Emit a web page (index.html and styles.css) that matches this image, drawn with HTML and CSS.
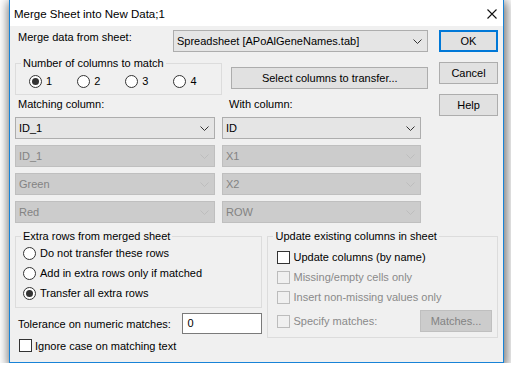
FILE: index.html
```html
<!DOCTYPE html>
<html>
<head>
<meta charset="utf-8">
<link rel="stylesheet" href="styles.css">
</head>
<body>
<div class="window">
  <div class="titlebar">
    <span class="title">Merge Sheet into New Data;1</span>
    <svg class="close" width="10" height="10" viewBox="0 0 10 10"><path d="M0.5 0.5 L9.5 9.5 M9.5 0.5 L0.5 9.5" stroke="#111" stroke-width="1.1" fill="none"/></svg>
  </div>
  <div class="client">
    <div class="top">
      <div class="main">
        <div class="row1">
          <span class="lbl-sheet">Merge data from sheet:</span>
          <div class="combo combo-sheet"><span>Spreadsheet [APoAlGeneNames.tab]</span><svg class="chev" width="9" height="5" viewBox="0 0 9 5"><path d="M0.5 0.5 L4.5 4.5 L8.5 0.5" stroke="#333" fill="none"/></svg></div>
        </div>
        <div class="row2">
          <fieldset class="group group-num">
            <legend>Number of columns to match</legend>
            <div class="radios">
              <label class="radio"><span class="rb checked"></span>1</label>
              <label class="radio"><span class="rb"></span>2</label>
              <label class="radio"><span class="rb"></span>3</label>
              <label class="radio"><span class="rb"></span>4</label>
            </div>
          </fieldset>
          <div class="btn btn-select">Select columns to transfer...</div>
        </div>
        <div class="col-labels">
          <span class="lbl-match">Matching column:</span>
          <span class="lbl-with">With column:</span>
        </div>
        <div class="combos">
          <div class="combo"><span>ID_1</span><svg class="chev" width="9" height="5" viewBox="0 0 9 5"><path d="M0.5 0.5 L4.5 4.5 L8.5 0.5" stroke="#333" fill="none"/></svg></div>
          <div class="combo"><span>ID</span><svg class="chev" width="9" height="5" viewBox="0 0 9 5"><path d="M0.5 0.5 L4.5 4.5 L8.5 0.5" stroke="#333" fill="none"/></svg></div>
          <div class="combo disabled"><span>ID_1</span><svg class="chev" width="9" height="5" viewBox="0 0 9 5"><path d="M0.5 0.5 L4.5 4.5 L8.5 0.5" stroke="#bdbdbd" fill="none"/></svg></div>
          <div class="combo disabled"><span>X1</span><svg class="chev" width="9" height="5" viewBox="0 0 9 5"><path d="M0.5 0.5 L4.5 4.5 L8.5 0.5" stroke="#bdbdbd" fill="none"/></svg></div>
          <div class="combo disabled"><span>Green</span><svg class="chev" width="9" height="5" viewBox="0 0 9 5"><path d="M0.5 0.5 L4.5 4.5 L8.5 0.5" stroke="#bdbdbd" fill="none"/></svg></div>
          <div class="combo disabled"><span>X2</span><svg class="chev" width="9" height="5" viewBox="0 0 9 5"><path d="M0.5 0.5 L4.5 4.5 L8.5 0.5" stroke="#bdbdbd" fill="none"/></svg></div>
          <div class="combo disabled"><span>Red</span><svg class="chev" width="9" height="5" viewBox="0 0 9 5"><path d="M0.5 0.5 L4.5 4.5 L8.5 0.5" stroke="#bdbdbd" fill="none"/></svg></div>
          <div class="combo disabled"><span>ROW</span><svg class="chev" width="9" height="5" viewBox="0 0 9 5"><path d="M0.5 0.5 L4.5 4.5 L8.5 0.5" stroke="#bdbdbd" fill="none"/></svg></div>
        </div>
      </div>
      <div class="buttons">
        <div class="btn btn-ok">OK</div>
        <div class="btn">Cancel</div>
        <div class="btn">Help</div>
      </div>
    </div>
    <div class="bottom">
      <div class="left-col">
        <fieldset class="group group-extra">
          <legend>Extra rows from merged sheet</legend>
          <div class="group-body extra-body">
            <label class="radio vrow"><span class="rb"></span>Do not transfer these rows</label>
            <label class="radio vrow"><span class="rb"></span>Add in extra rows only if matched</label>
            <label class="radio vrow"><span class="rb checked"></span>Transfer all extra rows</label>
          </div>
        </fieldset>
        <div class="tol-row">
          <span>Tolerance on numeric matches:</span>
          <div class="textbox">0</div>
        </div>
        <label class="check ignore"><span class="cb"></span>Ignore case on matching text</label>
      </div>
      <fieldset class="group group-update">
        <legend>Update existing columns in sheet</legend>
        <div class="group-body update-body">
          <label class="check crow"><span class="cb"></span>Update columns (by name)</label>
          <label class="check crow disabled"><span class="cb"></span>Missing/empty cells only</label>
          <label class="check crow disabled"><span class="cb"></span>Insert non-missing values only</label>
          <div class="spec-row">
            <label class="check disabled"><span class="cb"></span>Specify matches:</label>
            <div class="btn btn-disabled btn-matches">Matches...</div>
          </div>
        </div>
      </fieldset>
    </div>
  </div>
</div>
</body>
</html>
```
FILE: styles.css
```css
html, body {
  margin: 0;
  padding: 0;
  background: #ffffff;
}
body {
  font-family: "Liberation Sans", Arial, sans-serif;
  font-size: 11px;
  color: #000;
}
.window {
  margin-left: 9px;
  width: 495px;
  height: 363px;
  box-sizing: border-box;
  border: 1px solid #1883d7;
  border-top: none;
  background: #f0f0f0;
  box-shadow: 1px 3px 10px 2px rgba(0, 0, 0, 0.55);
}
.titlebar {
  height: 26px;
  background: #ffffff;
  display: flex;
  align-items: center;
  justify-content: space-between;
  padding: 0 6px 0 4px;
}
.title {
  font-size: 11.5px;
  padding-top: 1px;
}
.close {
  display: block;
  margin-top: 1px;
}
.client {
  padding: 0 5px 0 5px;
}
.top {
  display: flex;
  gap: 11px;
}
.main {
  width: 413px;
  display: flex;
  flex-direction: column;
}
.row1 {
  display: flex;
  align-items: flex-start;
  margin-top: 4px;
  height: 22px;
}
.lbl-sheet {
  width: 158px;
  padding: 1px 0 0 3px;
  box-sizing: border-box;
  line-height: 13px;
}
.combo {
  height: 22px;
  box-sizing: border-box;
  border: 1px solid #adadad;
  background: #e5e5e5;
  display: flex;
  align-items: center;
  justify-content: space-between;
  padding: 0 5px 0 3px;
}
.combo.disabled {
  background: #cccccc;
  border-color: #bfbfbf;
  color: #838383;
}
.combo-sheet {
  width: 255px;
}
.chev {
  display: block;
}
.row2 {
  display: flex;
  align-items: flex-start;
  margin-top: 5px;
}
.group {
  margin: 0;
  border: 1px solid #dcdcdc;
  padding: 0;
  min-width: 0;
  box-sizing: border-box;
}
.group legend {
  padding: 0 2px;
  margin-left: 5px;
  line-height: 13px;
}
.group-num {
  width: 208px;
  height: 38px;
}
.radios {
  display: flex;
  padding: 4px 0 0 13px;
}
.radio {
  display: flex;
  align-items: center;
  width: 49px;
  height: 14px;
}
.rb {
  width: 13px;
  height: 13px;
  box-sizing: border-box;
  border: 1px solid #333333;
  border-radius: 50%;
  background: #ffffff;
  margin-right: 4px;
  display: flex;
  align-items: center;
  justify-content: center;
  flex: none;
}
.rb.checked::after {
  content: "";
  width: 7px;
  height: 7px;
  border-radius: 50%;
  background: #333333;
}
.btn {
  box-sizing: border-box;
  border: 1px solid #adadad;
  background: #e1e1e1;
  height: 22px;
  display: flex;
  align-items: center;
  justify-content: center;
}
.btn-select {
  width: 197px;
  margin-left: 9px;
  margin-top: 10px;
}
.col-labels {
  display: flex;
  margin-top: 2px;
  height: 14px;
  align-items: center;
}
.lbl-match {
  width: 211px;
  padding-left: 3px;
}
.combos {
  display: grid;
  grid-template-columns: 200px 199px;
  column-gap: 7px;
  row-gap: 6px;
  margin-top: 6px;
}
.buttons {
  width: 59px;
  display: flex;
  flex-direction: column;
  gap: 10px;
  padding-top: 4px;
}
.btn-ok {
  border: 2px solid #0078d7;
}
.bottom {
  display: flex;
  gap: 5px;
  margin-top: 7px;
}
.left-col {
  width: 248px;
  display: flex;
  flex-direction: column;
}
.group-extra {
  height: 78px;
}
.extra-body {
  padding: 0 0 0 7px;
}
.vrow {
  width: auto;
  height: 20px;
}
.tol-row {
  display: flex;
  align-items: center;
  justify-content: space-between;
  margin-top: 5px;
  padding-left: 3px;
}
.textbox {
  width: 80px;
  height: 21px;
  box-sizing: border-box;
  border: 1px solid #7a7a7a;
  background: #fff;
  padding: 3px 4px;
}
.check {
  display: flex;
  align-items: center;
}
.cb {
  width: 13px;
  height: 13px;
  box-sizing: border-box;
  border: 1px solid #333333;
  background: #ffffff;
  margin-right: 3px;
  flex: none;
}
.check.disabled {
  color: #8a8a8a;
}
.check.disabled .cb {
  border-color: #bcbcbc;
  background: #f0f0f0;
}
.ignore {
  margin-top: 5px;
  padding-left: 4px;
}
.group-update {
  width: 231px;
  height: 108px;
}
.update-body {
  padding: 4px 0 0 9px;
}
.crow {
  height: 20px;
}
.spec-row {
  display: flex;
  align-items: center;
  justify-content: space-between;
  padding-right: 5px;
  margin-top: 3px;
}
.btn-disabled {
  background: #cccccc;
  border-color: #bfbfbf;
  color: #838383;
}
.btn-matches {
  width: 72px;
}
```
